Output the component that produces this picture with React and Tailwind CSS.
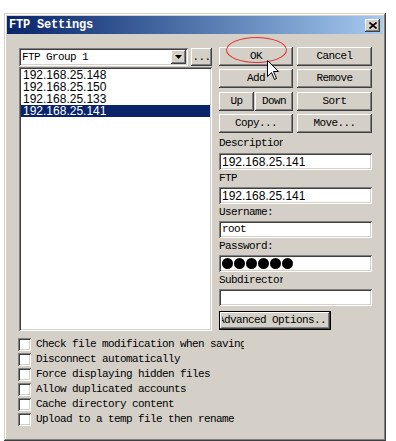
import React from "react"

const raised = "shadow-[inset_-1px_-1px_#404040,inset_1px_1px_#ffffff,inset_-2px_-2px_#808080,inset_2px_2px_#d4d0c8]"
const sunken = "shadow-[inset_1px_1px_#808080,inset_-1px_-1px_#ffffff,inset_2px_2px_#404040,inset_-2px_-2px_#d4d0c8]"
const mono = "font-['Liberation_Mono',monospace] text-[11px] tracking-[-0.6px] text-black"
const sans = "font-['Liberation_Sans',Arial,sans-serif] text-[12px] text-black"

const hosts = ["192.168.25.148", "192.168.25.150", "192.168.25.133", "192.168.25.141"]

const options = [
  "Check file modification when saving",
  "Disconnect automatically",
  "Force displaying hidden files",
  "Allow duplicated accounts",
  "Cache directory content",
  "Upload to a temp file then rename",
]

const Btn = ({ w, children }) => (
  <div className={`${raised} ${mono} ${w} h-[19px] bg-[#d4d0c8] flex items-center justify-center whitespace-nowrap overflow-hidden`}>
    {children}
  </div>
)

const Field = ({ label, clip, children, first }) => (
  <>
    <div className={`${first ? "h-[20px]" : "h-[17px]"} flex items-center`}>
      <span className={`${mono} whitespace-nowrap overflow-hidden ${clip ? "w-[64px]" : ""}`}>{label}</span>
    </div>
    <div className={`${sunken} h-[17px] bg-white flex items-center pl-[3px] overflow-hidden`}>
      {children}
    </div>
  </>
)

const App = () => {
  return (
    <div className="w-[396px] h-[441px] bg-white relative overflow-hidden">
      <div className="ml-[4px] mt-[13px] w-[382px] h-[428px] bg-[#d4d0c8] p-[3px] flex flex-col shadow-[inset_-1px_-1px_#404040,inset_1px_1px_#d4d0c8,inset_-2px_-2px_#808080,inset_2px_2px_#ffffff]">
        {/* title bar */}
        <div className="h-[18px] flex items-center bg-gradient-to-r from-[#0a246a] to-[#a6caf0] pl-[2px] pr-[3px]">
          <span className="font-['Liberation_Mono',monospace] text-[12px] font-bold text-white tracking-[-0.2px]">FTP Settings</span>
          <div className={`${raised} ml-auto w-[15px] h-[13px] bg-[#d4d0c8] flex items-center justify-center`}>
            <svg width="8" height="7" viewBox="0 0 8 7">
              <path d="M0.5 0.5 L7.5 6.5 M7.5 0.5 L0.5 6.5" stroke="#000" strokeWidth="1.6" />
            </svg>
          </div>
        </div>

        <div className="pl-[12px] pt-[13px] flex flex-col">
          <div className="flex gap-[7px]">
            {/* left column */}
            <div className="w-[193px] pt-[1px] flex flex-col">
              <div className="h-[18px] flex gap-[3px]">
                <div className={`${sunken} w-[169px] bg-white flex items-center pl-[3px] pr-[2px]`}>
                  <span className={mono}>FTP Group 1</span>
                  <div className={`${raised} ml-auto w-[15px] h-[14px] bg-[#d4d0c8] flex items-center justify-center`}>
                    <svg width="7" height="4" viewBox="0 0 7 4">
                      <path d="M0 0 H7 L3.5 4 Z" fill="#000" />
                    </svg>
                  </div>
                </div>
                <div className={`${raised} ${mono} w-[21px] bg-[#d4d0c8] flex items-center justify-center`}>...</div>
              </div>
              <div className={`${sunken} mt-[1px] h-[264px] bg-white p-[2px] flex flex-col`}>
                {hosts.map((h, i) => (
                  <div
                    key={h}
                    className={`${sans} h-[12px] leading-[12px] pl-[2px] ${i === 3 ? "bg-[#0a246a] text-white" : ""}`}
                  >
                    {h}
                  </div>
                ))}
              </div>
            </div>

            {/* right column */}
            <div className="w-[153px] flex flex-col">
              <div className="flex gap-[4px]">
                <Btn w="w-[74px]">OK</Btn>
                <Btn w="w-[75px]">Cancel</Btn>
              </div>
              <div className="flex gap-[4px] mt-[3px]">
                <Btn w="w-[74px]">Add</Btn>
                <Btn w="w-[75px]">Remove</Btn>
              </div>
              <div className="flex gap-[4px] mt-[4px]">
                <div className="w-[74px] flex gap-[1px]">
                  <Btn w="w-[35px]">Up</Btn>
                  <Btn w="w-[38px]">Down</Btn>
                </div>
                <Btn w="w-[75px]">Sort</Btn>
              </div>
              <div className="flex gap-[4px] mt-[3px]">
                <Btn w="w-[74px]">Copy...</Btn>
                <Btn w="w-[75px]">Move...</Btn>
              </div>

              <Field label="Description" clip first>
                <span className={sans}>192.168.25.141</span>
              </Field>
              <Field label="FTP">
                <span className={sans}>192.168.25.141</span>
              </Field>
              <Field label="Username:">
                <span className={mono}>root</span>
              </Field>
              <Field label="Password:">
                <div className="flex gap-[1px]">
                  {[0, 1, 2, 3, 4, 5].map((d) => (
                    <span key={d} className="w-[11px] h-[11px] rounded-full bg-black" />
                  ))}
                </div>
              </Field>
              <Field label="Subdirectory" clip>
                <span />
              </Field>

              <div className="mt-[5px] w-[112px] h-[19px] border border-black">
                <div className={`${raised} h-full bg-[#d4d0c8] flex items-center justify-center`}>
                  <div className="w-[106px] overflow-hidden flex justify-center">
                    <span className={`${mono} whitespace-nowrap`}>Advanced Options...</span>
                  </div>
                </div>
              </div>
            </div>
          </div>

          {/* checkboxes */}
          <div className="mt-[6px] ml-[-1px] flex flex-col">
            {options.map((o) => (
              <div key={o} className="h-[15px] flex items-center gap-[5px]">
                <div className={`${sunken} w-[13px] h-[13px] bg-white`} />
                <span className={`${mono} w-[208px] whitespace-nowrap overflow-hidden`}>{o}</span>
              </div>
            ))}
          </div>
        </div>
      </div>

      {/* red marker ellipse over the OK button */}
      <div className="absolute left-[226px] top-[37px] w-[61px] h-[26px] rounded-[50%] border border-[#e03030]" />

      {/* mouse pointer */}
      <svg className="absolute left-[267px] top-[60px]" width="13" height="21" viewBox="0 0 13 21">
        <path d="M0.5 0.5 L0.5 16.5 L4.5 12.5 L7.5 19.5 L9.5 18.5 L6.5 11.5 L11.5 11.5 Z" fill="#fff" stroke="#000" strokeWidth="1" />
      </svg>
    </div>
  )
}

export default App
